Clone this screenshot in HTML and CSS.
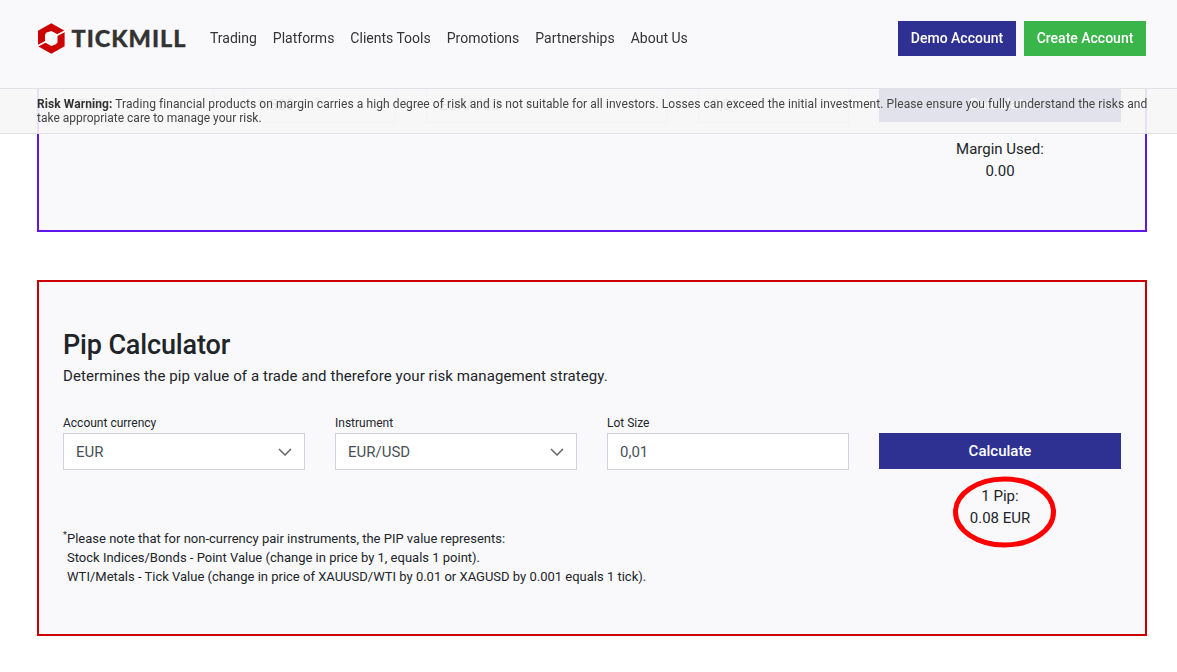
FILE: index.html
```html
<!DOCTYPE html>
<html lang="en">

<head>
    <meta charset="UTF-8" />
    <meta name="viewport" content="width=device-width, initial-scale=1.0" />
    <title>Forex Calculators | Tickmill</title>
    <link rel="stylesheet" href="styles.css">
</head>

<body>
    <header class="header">
        <div class="navbar">
            <a class="logo" href="#">
                <svg width="149" height="32" viewBox="0 0 149 32">
                    <path fill="#c00" d="M14.3 0.3 L27.6 7.8 V23.2 L14.3 30.8 L1 23.2 V7.8 Z" />
                    <path fill="#f9f9fb" d="M9.5 9.5 L14.3 8 L20.5 11.3 V19.5 L18.5 21.5 L14.3 23 L8 19.5 V11.5 Z" />
                    <path stroke="#f9f9fb" stroke-width="1.8" d="M19 12.8 L28.5 7.8 M9.5 18.2 L0 23.2" />
                    <text class="logo-text" x="34.5" y="24" textLength="114" lengthAdjust="spacing">TICKMILL</text>
                </svg>
            </a>
            <nav class="menu">
                <a href="#">Trading</a>
                <a href="#">Platforms</a>
                <a href="#">Clients Tools</a>
                <a href="#">Promotions</a>
                <a href="#">Partnerships</a>
                <a href="#">About Us</a>
            </nav>
            <div class="actions">
                <a class="btn btn-demo" href="#">Demo Account</a>
                <a class="btn btn-create" href="#">Create Account</a>
            </div>
        </div>
        <div class="warning">
            <p><strong>Risk Warning:</strong> Trading financial products on margin carries a high degree of risk and is not suitable for all investors. Losses can exceed the initial investment. Please ensure you fully understand the risks and <span class="last-line">take appropriate care to manage your risk.</span></p>
        </div>
    </header>

    <main class="content">
        <section class="card card-margin">
            <div class="row row-margin">
                <div class="field">EUR</div>
                <div class="field">1:500</div>
                <div class="field">EUR/USD</div>
                <div class="field">0,01</div>
                <div>
                    <button class="calc-btn">Calculate</button>
                    <div class="result">Margin Used:<br>0.00</div>
                </div>
            </div>
        </section>

        <section class="card card-pip">
            <h2>Pip Calculator</h2>
            <p class="lead">Determines the pip value of a trade and therefore your risk management strategy.</p>
            <div class="row row-pip">
                <div>
                    <label>Account currency</label>
                    <div class="field">EUR
                        <svg class="arrow" width="14" height="8" viewBox="0 0 14 8"><path d="M1 1 L7 7 L13 1" /></svg>
                    </div>
                </div>
                <div>
                    <label>Instrument</label>
                    <div class="field">EUR/USD
                        <svg class="arrow" width="14" height="8" viewBox="0 0 14 8"><path d="M1 1 L7 7 L13 1" /></svg>
                    </div>
                </div>
                <div>
                    <label>Lot Size</label>
                    <div class="field">0,01</div>
                </div>
                <div class="calc">
                    <button class="calc-btn">Calculate</button>
                    <div class="result">1 Pip:<br>0.08 EUR
                        <svg class="circle" width="106" height="74" viewBox="0 0 106 74"><ellipse cx="52.5" cy="37" rx="49" ry="33" /></svg>
                    </div>
                </div>
            </div>
            <div class="note">
                <sup>*</sup>
                <p>Please note that for non-currency pair instruments, the PIP value represents:<br>
                    Stock Indices/Bonds - Point Value (change in price by 1, equals 1 point).<br>
                    WTI/Metals - Tick Value (change in price of XAUUSD/WTI by 0.01 or XAGUSD by 0.001 equals 1 tick).</p>
            </div>
        </section>
    </main>
</body>

</html>
```

FILE: styles.css
```css
* {
    box-sizing: border-box;
}

body {
    margin: 0;
    font-family: Roboto, "Liberation Sans", sans-serif;
    font-size: 15px;
    line-height: 22px;
    color: #212529;
    background: #fff;
    overflow: hidden;
}

p,
h2 {
    margin: 0;
}

.header {
    position: fixed;
    top: 0;
    left: 0;
    right: 0;
    z-index: 10;
}

.navbar {
    display: flex;
    height: 89px;
    padding: 21px 31px 0 37px;
    background: #f9f9fb;
    border-bottom: 1px solid #dee2e6;
}

.logo {
    margin-top: 2px;
    height: 32px;
}

.logo-text {
    font-family: Lato, sans-serif;
    font-weight: 900;
    font-size: 23.5px;
    fill: #333;
    stroke: #333;
    stroke-width: 0.3;
}

.menu {
    display: flex;
    gap: 16px;
    margin-left: 24px;
    line-height: 34px;
}

.menu a {
    color: #333;
    font-size: 14px;
    text-decoration: none;
}

.actions {
    display: flex;
    gap: 8px;
    margin-left: auto;
}

.btn {
    height: 35px;
    color: #fff;
    font-size: 14px;
    font-weight: 500;
    line-height: 34px;
    text-align: center;
    text-decoration: none;
}

.btn-demo {
    width: 118px;
    background: #2e3192;
}

.btn-create {
    width: 122px;
    background: #39b54a;
}

.warning {
    height: 45px;
    padding: 8px 25px 0 37px;
    background: rgba(246, 246, 246, 0.9);
    border-bottom: 1px solid #dee2e6;
    color: #444;
    font-size: 12px;
    line-height: 14px;
    letter-spacing: 0.08px;
}

.warning p {
    margin-right: -5px;
}

.warning strong {
    color: #333;
}

.last-line {
    letter-spacing: 0;
}

.content {
    padding: 80px 30px 0 37px;
}

.card {
    background: #f9f9fb;
    padding: 0 24px;
}

.card-margin {
    height: 152px;
    padding-top: 6px;
    border: 2px solid #5e17eb;
    border-top: 0;
    margin-bottom: 48px;
}

.card-pip {
    height: 356px;
    padding-top: 48px;
    border: 2px solid #c00;
}

.row {
    display: grid;
    column-gap: 30px;
    align-items: start;
}

.row-margin {
    grid-template-columns: 151px 152px 242px 151px 242px;
}

.row-pip {
    grid-template-columns: repeat(4, 242px);
    margin-top: 27px;
}

.field {
    display: flex;
    align-items: center;
    justify-content: space-between;
    height: 37px;
    padding: 0 12px;
    background: #fff;
    border: 1px solid #ced4da;
    color: #495057;
}

.arrow path {
    fill: none;
    stroke: #666;
    stroke-width: 1.5;
}

label {
    display: block;
    font-size: 12px;
    line-height: 18px;
    margin-bottom: 1px;
}

.calc {
    padding-top: 19px;
}

.calc-btn {
    display: block;
    width: 100%;
    height: 36px;
    padding: 0;
    border: 0;
    background: #2e3192;
    color: #fff;
    font-family: inherit;
    font-size: 15px;
    font-weight: 500;
}

.result {
    position: relative;
    margin-top: 16px;
    text-align: center;
}

.circle {
    position: absolute;
    top: -10px;
    left: 73px;
}

.circle ellipse {
    fill: none;
    stroke: #f00;
    stroke-width: 5;
}

h2 {
    font-size: 27px;
    font-weight: 500;
    line-height: 30px;
    letter-spacing: -0.15px;
}

.lead {
    margin-top: 5px;
    letter-spacing: 0.08px;
}

.note {
    display: flex;
    font-size: 13px;
    line-height: 19px;
}

.note sup {
    width: 4px;
    font-size: 9px;
    line-height: 12px;
}
```
